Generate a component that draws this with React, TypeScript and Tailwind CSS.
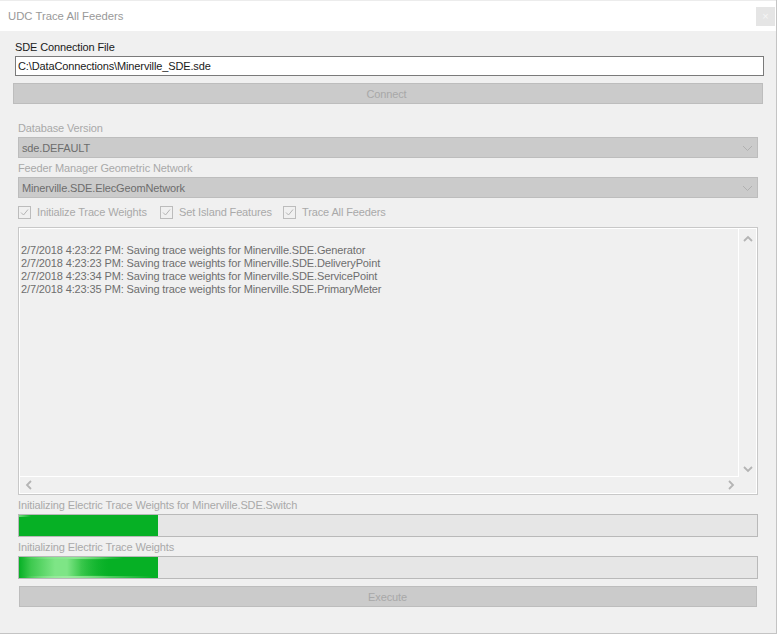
import React from 'react';

const LOG_LINES = [
  '2/7/2018 4:23:22 PM: Saving trace weights for Minerville.SDE.Generator',
  '2/7/2018 4:23:23 PM: Saving trace weights for Minerville.SDE.DeliveryPoint',
  '2/7/2018 4:23:34 PM: Saving trace weights for Minerville.SDE.ServicePoint',
  '2/7/2018 4:23:35 PM: Saving trace weights for Minerville.SDE.PrimaryMeter',
];

const Chevron: React.FC<{ d: string; className?: string }> = ({ d, className }) => (
  <svg width="10" height="10" viewBox="0 0 10 10" fill="none" className={className}>
    <path d={d} stroke="#b4b4b4" strokeWidth="1.8" />
  </svg>
);

const Combo: React.FC<{ text: string }> = ({ text }) => (
  <div className="flex h-[21px] items-center justify-between border border-[#bdbdbd] bg-[#cbcbcb] pl-[3px] pr-[4px] pt-[1px] text-[#6d6d6d]">
    <span>{text}</span>
    <svg width="11" height="7" viewBox="0 0 11 7" fill="none">
      <path d="M1 1l4.5 4.5L10 1" stroke="#b0b0b0" />
    </svg>
  </div>
);

const Check: React.FC<{ text: string; className: string }> = ({ text, className }) => (
  <div className={`flex items-center gap-[6px] whitespace-nowrap ${className}`}>
    <div className="flex h-[13px] w-[13px] items-center justify-center border border-[#bcbcbc]">
      <svg width="11" height="11" viewBox="0 0 11 11" fill="none">
        <path d="M2 5.5l2.5 2.5L9 2.5" stroke="#b4b4b4" />
      </svg>
    </div>
    <span>{text}</span>
  </div>
);

const Progress: React.FC<{ glow?: boolean }> = ({ glow }) => (
  <div className="h-[23px] border border-[#b9b9b9] bg-[#e6e6e6]">
    <div className="relative h-full w-[139px] overflow-hidden bg-[#06b025]">
      {glow ? (
        <>
          <div className="absolute inset-y-0 left-0 w-[110px] bg-[linear-gradient(90deg,#06b025_0px,#3ec94f_12px,#7ee586_36px,#7ee586_48px,#3ec94f_62px,#06b025_90px)]" />
          <div className="absolute inset-x-0 top-[3px] bottom-[3px] bg-[linear-gradient(90deg,#06b02500_0px,#06b02500_60px,#06b025_100px)]" />
          <div className="absolute left-[4px] top-0 h-[2px] w-[100px] bg-[linear-gradient(90deg,#8ce89400,#8ce894,#8ce89400)]" />
          <div className="absolute bottom-0 left-[6px] h-[2px] w-[128px] bg-[linear-gradient(90deg,#8ce89400,#9bec9f_30%,#8ce89400)]" />
        </>
      ) : (
        <div className="absolute left-0 top-0 h-[2px] w-[12px] bg-[linear-gradient(90deg,#6fdc7a,#06b025)]" />
      )}
    </div>
  </div>
);

export default function App() {
  return (
    <div className="flex h-[634px] w-[777px] flex-col overflow-hidden border-r border-b border-[#c4c4c4] bg-[#f0f0f0] font-['Liberation_Sans',sans-serif] text-[11px] leading-[13px] tracking-[-0.13px] text-[#a9a9a9]">
      <div className="flex h-[31px] shrink-0 items-center justify-between border-t border-[#ececec] bg-white pl-[8px] pr-[1px] text-[#999999]">
        <span className="text-[11.3px] tracking-normal">UDC Trace All Feeders</span>
        <div className="flex h-[19px] w-[19px] items-center justify-center bg-[#e5e5e5] text-[11px] text-[#f5f5f5]">×</div>
      </div>

      <div className="flex flex-col pl-[18px] pr-[18px]">
        <div className="-ml-[3px] mt-[10px] text-[#1a1a1a]">SDE Connection File</div>
        <div className="-ml-[3px] -mr-[6px] mt-[2px] flex h-[20px] items-center border border-[#7a7a7a] bg-white pl-[2px] text-[#1a1a1a]">
          C:\DataConnections\Minerville_SDE.sde
        </div>
        <div className="-ml-[5px] -mr-[5px] mt-[7px] flex h-[21px] items-center justify-center border border-[#bdbdbd] bg-[#cbcbcb] pr-[3px] pt-[1px] text-[#a8a8a8]">
          Connect
        </div>

        <div className="mt-[18px]">Database Version</div>
        <div className="mt-[2px]"><Combo text="sde.DEFAULT" /></div>
        <div className="mt-[4px]">Feeder Manager Geometric Network</div>
        <div className="mt-[2px]"><Combo text="Minerville.SDE.ElecGeomNetwork" /></div>

        <div className="mt-[7px] flex h-[14px] items-center">
          <Check text="Initialize Trace Weights" className="w-[142px]" />
          <Check text="Set Island Features" className="w-[123px]" />
          <Check text="Trace All Feeders" className="" />
        </div>

        <div className="mt-[8px] flex h-[268px] border border-[#c8c8c8]">
          <div className="flex flex-1 flex-col border border-white">
            <div className="flex min-h-0 flex-1">
              <div className="flex-1 border-r border-b border-white pl-[1px] pt-[15px] text-[#6e6e6e]">
                {LOG_LINES.map((line) => (
                  <div key={line}>{line}</div>
                ))}
              </div>
              <div className="flex w-[17px] flex-col items-center justify-between pt-[5px] pb-[3px]">
                <Chevron d="M1 7l4-4 4 4" />
                <Chevron d="M1 3l4 4 4-4" />
              </div>
            </div>
            <div className="flex h-[16px] items-center justify-between pl-[4px] pr-[20px]">
              <Chevron d="M7 1L3 5l4 4" />
              <Chevron d="M3 1l4 4-4 4" />
            </div>
          </div>
        </div>

        <div className="mt-[4px]">Initializing Electric Trace Weights for Minerville.SDE.Switch</div>
        <div className="mt-[2px]"><Progress /></div>
        <div className="mt-[4px]">Initializing Electric Trace Weights</div>
        <div className="mt-[2px]"><Progress glow /></div>
        <div className="ml-[1px] mr-[1px] mt-[7px] flex h-[21px] items-center justify-center border border-[#bdbdbd] bg-[#cbcbcb] pr-[1px] pt-[1px] text-[#a8a8a8]">
          Execute
        </div>
      </div>
    </div>
  );
}
